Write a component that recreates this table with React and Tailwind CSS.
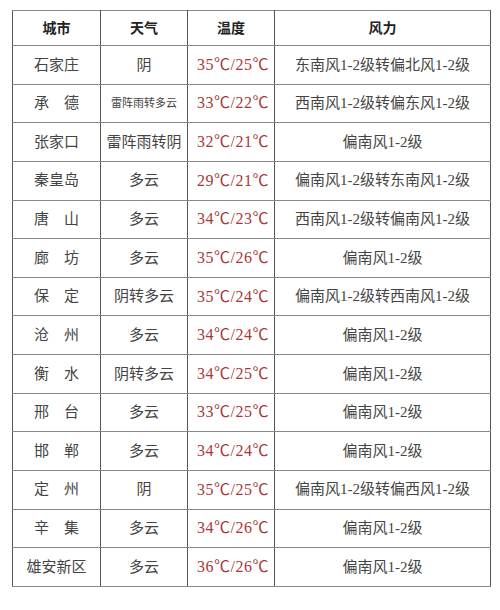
const rows = [
  ['石家庄', '阴', '35℃/25℃', '东南风1-2级转偏北风1-2级'],
  ['承　德', '雷阵雨转多云', '33℃/22℃', '西南风1-2级转偏东风1-2级', true],
  ['张家口', '雷阵雨转阴', '32℃/21℃', '偏南风1-2级'],
  ['秦皇岛', '多云', '29℃/21℃', '偏南风1-2级转东南风1-2级'],
  ['唐　山', '多云', '34℃/23℃', '西南风1-2级转偏南风1-2级'],
  ['廊　坊', '多云', '35℃/26℃', '偏南风1-2级'],
  ['保　定', '阴转多云', '35℃/24℃', '偏南风1-2级转西南风1-2级'],
  ['沧　州', '多云', '34℃/24℃', '偏南风1-2级'],
  ['衡　水', '阴转多云', '34℃/25℃', '偏南风1-2级'],
  ['邢　台', '多云', '33℃/25℃', '偏南风1-2级'],
  ['邯　郸', '多云', '34℃/24℃', '偏南风1-2级'],
  ['定　州', '阴', '35℃/25℃', '偏南风1-2级转偏西风1-2级'],
  ['辛　集', '多云', '34℃/26℃', '偏南风1-2级'],
  ['雄安新区', '多云', '36℃/26℃', '偏南风1-2级'],
];

const font = { fontFamily: '"Liberation Serif", "Noto Sans CJK SC", serif' };

// cell borders: dark verticals, lighter horizontals like the scan
const cell = 'border border-x-[#555] border-y-[#888] p-0 text-center';

export default function App() {
  return (
    <div className="w-[500px] h-[610px] bg-white pt-[10px] pl-[12px]" style={font}>
      <table className="border-collapse table-fixed w-[478px]">
        <colgroup>
          <col className="w-[88px]" />
          <col className="w-[87px]" />
          <col className="w-[87px]" />
          <col className="w-[216px]" />
        </colgroup>
        <thead>
          <tr className="h-[35px]">
            {['城市', '天气', '温度', '风力'].map((h) => (
              <th key={h} className={`${cell} text-[14px] font-bold text-[#222]`}>
                {h}
              </th>
            ))}
          </tr>
        </thead>
        <tbody>
          {rows.map((r) => (
            <tr key={r[0]} className="h-[38.64px]">
              <td className={`${cell} text-[15px] text-[#444]`}>{r[0]}</td>
              <td className={`${cell} text-[#444] ${r[4] ? 'text-[11px]' : 'text-[15px]'}`}>{r[1]}</td>
              <td className={`${cell} pl-[4px] text-[16px] text-[#a83838] tracking-[0.5px]`}>{r[2]}</td>
              <td className={`${cell} text-[15px] text-[#444]`}>{r[3]}</td>
            </tr>
          ))}
        </tbody>
      </table>
    </div>
  );
}
